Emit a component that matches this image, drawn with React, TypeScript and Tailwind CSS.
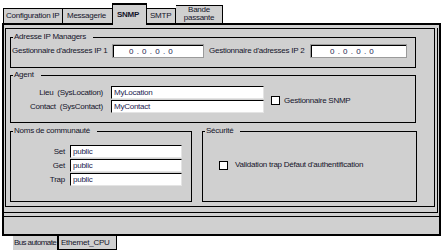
import React from "react";

const GRAY = "bg-[#d0d0d0]";

function Group({
  label,
  className,
  children,
}: {
  label: string;
  className?: string;
  children?: React.ReactNode;
}) {
  return (
    <div className={`relative border border-black ${className ?? ""}`}>
      <span className="absolute -top-[6px] left-[2px] bg-[#d0d0d0] pl-[1px] pr-[7px] leading-[10px] whitespace-nowrap">
        {label}
      </span>
      {children}
    </div>
  );
}

function Field({ value, className }: { value: string; className?: string }) {
  return (
    <div
      className={`h-[13px] bg-white border-t border-l border-black border-r border-b border-r-[#e4e4e4] border-b-[#e4e4e4] pl-[2px] leading-[11px] text-[#1c1c50] whitespace-nowrap overflow-hidden ${className ?? ""}`}
    >
      {value}
    </div>
  );
}

function IpField({ className, pad }: { className?: string; pad: string }) {
  return (
    <div className={`h-[14px] border border-[#9a9a9a] ${className ?? ""}`}>
      <div
        className={`h-full bg-white border-t border-l border-black leading-[11px] text-[#1c1c50] whitespace-pre [word-spacing:1.5px] ${pad}`}
      >
        0 . 0 . 0 . 0
      </div>
    </div>
  );
}

function Check() {
  return <div className="w-[9px] h-[9px] bg-white border border-black shrink-0" />;
}

export default function App() {
  return (
    <div
      className="w-[444px] h-[252px] bg-white overflow-hidden text-[8px] tracking-[-0.25px] text-[#14142a]"
      style={{ fontFamily: '"Liberation Sans", Arial, sans-serif' }}
    >
      {/* Top tabs */}
      <div className="h-[23px] flex items-end pl-[3px] relative z-10">
        <div className={`w-[59px] h-[15px] ${GRAY} border-l border-t border-black pl-[2px] leading-[14px] whitespace-nowrap overflow-hidden`}>
          Configuration IP
        </div>
        <div className={`w-[50px] h-[15px] ${GRAY} border-l border-t border-black pl-[4px] leading-[14px] whitespace-nowrap overflow-hidden`}>
          Messagerie
        </div>
        <div className={`w-[35px] h-[22px] -mb-[2px] ${GRAY} border-l border-t-2 border-r border-black pl-[4px] pt-[5px] leading-[10px] font-bold whitespace-nowrap`}>
          SNMP
        </div>
        <div className={`w-[29px] h-[15px] ${GRAY} border-t border-r border-black pl-[3px] leading-[14px] whitespace-nowrap`}>
          SMTP
        </div>
        <div className={`w-[47px] h-[18px] ${GRAY} border-t border-r border-black text-center leading-[8px] whitespace-nowrap`}>
          Bande
          <br />
          passante
        </div>
      </div>

      {/* Panel */}
      <div className={`ml-[2px] w-[439px] h-[213px] border-2 border-black ${GRAY}`}>
        <div className="w-full h-[189px] border-b border-black">
          <div className="w-[434px] h-[185px] border-r border-b border-black">
            <div className="ml-[1px] mt-[3px] w-[430px] h-[179px] border border-black flex flex-col pl-[4px] pt-[8px]">
              {/* Adresse IP Managers */}
              <Group label="Adresse IP Managers" className="w-[406px] h-[31px]">
                <div className="mt-[6px] h-[14px] flex items-center">
                  <div className="w-[101px] pl-[1px] whitespace-nowrap">Gestionnaire d'adresses IP 1</div>
                  <IpField className="w-[92px]" pad="pl-[15px]" />
                  <div className="w-[106px] pl-[5px] whitespace-nowrap">Gestionnaire d'adresses IP 2</div>
                  <IpField className="w-[97px]" pad="pl-[18px]" />
                </div>
              </Group>

              {/* Agent */}
              <Group label="Agent" className="mt-[7px] w-[406px] h-[48px]">
                <div className="mt-[10px] flex items-center">
                  <div className="flex flex-col gap-[1px]">
                    <div className="flex items-center h-[13px]">
                      <div className="w-[93px] text-right pr-[1px] whitespace-pre leading-[13px]">Lieu  (SysLocation)</div>
                      <Field value="MyLocation" className="ml-[7px] w-[153px]" />
                    </div>
                    <div className="flex items-center h-[13px]">
                      <div className="w-[93px] text-right pr-[1px] whitespace-pre leading-[13px]">Contact  (SysContact)</div>
                      <Field value="MyContact" className="ml-[7px] w-[153px]" />
                    </div>
                  </div>
                  <div className="ml-[7px] mt-[2px] flex items-center">
                    <Check />
                    <span className="ml-[4px] leading-[10px] whitespace-nowrap">Gestionnaire SNMP</span>
                  </div>
                </div>
              </Group>

              {/* Bottom row */}
              <div className="mt-[8px] flex">
                <Group label="Noms de communauté" className="w-[182px] h-[71px]">
                  <div className="mt-[13px] flex flex-col gap-[1px]">
                    {["Set", "Get", "Trap"].map((l) => (
                      <div key={l} className="flex items-center h-[13px]">
                        <div className="w-[55px] text-right pr-[1px] leading-[13px]">{l}</div>
                        <Field value="public" className="ml-[4px] w-[112px]" />
                      </div>
                    ))}
                  </div>
                </Group>
                <Group label="Sécurité" className="ml-[10px] w-[215px] h-[71px]">
                  <div className="mt-[28px] ml-[16px] flex items-center">
                    <Check />
                    <span className="ml-[7px] leading-[10px] whitespace-nowrap">
                      Validation trap Défaut d'authentification
                    </span>
                  </div>
                </Group>
              </div>
            </div>
          </div>
        </div>
      </div>

      {/* Bottom tabs */}
      <div className="flex pl-[13px] h-[14px]">
        <div className={`w-[46px] h-[14px] ${GRAY} border-r-2 border-black pl-[1px] leading-[13px] whitespace-nowrap overflow-hidden tracking-[-0.6px]`}>
          Bus automate
        </div>
        <div className={`w-[58px] h-[14px] ${GRAY} border-r border-b border-black pl-[2px] leading-[13px] whitespace-nowrap overflow-hidden`}>
          Ethernet_CPU
        </div>
      </div>
    </div>
  );
}
